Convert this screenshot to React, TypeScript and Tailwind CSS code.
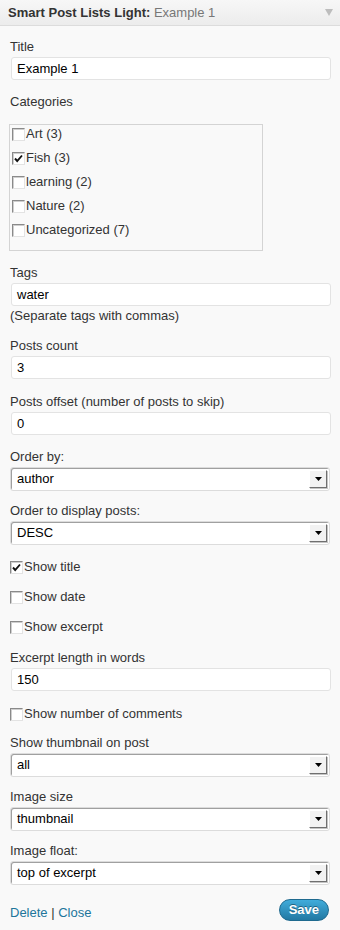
import React from 'react';

const categories = [
  { name: 'Art (3)', checked: false },
  { name: 'Fish (3)', checked: true },
  { name: 'learning (2)', checked: false },
  { name: 'Nature (2)', checked: false },
  { name: 'Uncategorized (7)', checked: false },
];

function Checkbox({ checked }: { checked?: boolean }) {
  return (
    <span className="relative inline-block w-[13px] h-[13px] shrink-0 bg-white border-t border-l border-[#8a8a8a] border-b border-r border-b-[#e3e3e3] border-r-[#e3e3e3] shadow-[inset_1px_1px_0_#cfcfcf]">
      {checked && (
        <svg viewBox="0 0 13 13" className="absolute left-[-1px] top-[-1px] w-[13px] h-[13px]">
          <path d="M3 6.5 L5.2 9 L10 3.5" fill="none" stroke="#111" strokeWidth="1.9" />
        </svg>
      )}
    </span>
  );
}

function Label({ children, className = '' }: { children: React.ReactNode; className?: string }) {
  return <div className={`h-4 leading-4 text-[13px] text-[#333] ${className}`}>{children}</div>;
}

function TextInput({ value }: { value: string }) {
  return (
    <div className="mt-[2px] ml-[2px] h-[23px] w-[320px] bg-white border border-[#e3e3e3] rounded-[3px] px-[5px] leading-[21px] text-[13px] text-black">
      {value}
    </div>
  );
}

function Select({ value }: { value: string }) {
  return (
    <div className="mt-[2px] ml-[1px] h-[24px] w-[320px] flex items-center bg-white border border-[#dcdcdc] rounded-[3px] shadow-[inset_1px_1px_0_#a0a0a0]">
      <span className="flex-1 pl-[6px] text-[13px] text-black leading-4">{value}</span>
      <span className="mr-[2px] w-[18px] h-[18px] flex items-center justify-center bg-[#f2f2f2] border border-t-white border-l-white border-b-[#6f6f6f] border-r-[#6f6f6f] shadow-[1px_1px_0_#c4c4c4]">
        <svg viewBox="0 0 7 4" className="w-[7px] h-[4px]">
          <path d="M0 0 H7 L3.5 4 Z" fill="#000" />
        </svg>
      </span>
    </div>
  );
}

function CheckRow({ label, checked }: { label: string; checked?: boolean }) {
  return (
    <div className="flex items-center gap-[1px] h-4 text-[13px] text-[#333] leading-4">
      <Checkbox checked={checked} />
      <span>{label}</span>
    </div>
  );
}

export default function App() {
  return (
    <div className="w-[340px] h-[930px] bg-[#f9f9f9] font-['Liberation_Sans',Arial,sans-serif]">
      <div className="h-[26px] flex items-center justify-between pl-[8px] pr-[7px] bg-gradient-to-b from-[#f7f7f7] to-[#ececec] border-b border-[#dcdcdc]">
        <div className="text-[13px] leading-4 text-[#333]">
          <span className="font-bold">Smart Post Lists Light:</span>
          <span className="text-[#777]"> Example 1</span>
        </div>
        <svg viewBox="0 0 8 7" className="w-[8px] h-[7px]">
          <path d="M0 0 H8 L4 7 Z" fill="#bdbdbd" />
        </svg>
      </div>

      <div className="pl-[9px] pr-[9px]">
        <Label className="mt-[13px] ml-[1px]">Title</Label>
        <TextInput value="Example 1" />

        <Label className="mt-[14px] ml-[1px]">Categories</Label>
        <div className="mt-[14px] w-[254px] h-[127px] border border-[#d4d4d4] pt-[1px] pl-[2px] flex flex-col gap-[8px]">
          {categories.map((c) => (
            <CheckRow key={c.name} label={c.name} checked={c.checked} />
          ))}
        </div>

        <Label className="mt-[14px] ml-[1px]">Tags</Label>
        <TextInput value="water" />
        <Label className="mt-[2px] ml-[1px]">(Separate tags with commas)</Label>

        <Label className="mt-[14px] ml-[1px]">Posts count</Label>
        <TextInput value="3" />

        <Label className="mt-[15px] ml-[1px]">Posts offset (number of posts to skip)</Label>
        <TextInput value="0" />

        <Label className="mt-[14px] ml-[1px]">Order by:</Label>
        <Select value="author" />

        <Label className="mt-[12px] ml-[1px]">Order to display posts:</Label>
        <Select value="DESC" />

        <div className="mt-[14px] ml-[1px] flex flex-col gap-[14px]">
          <CheckRow label="Show title" checked />
          <CheckRow label="Show date" />
          <CheckRow label="Show excerpt" />
        </div>

        <Label className="mt-[15px] ml-[1px]">Excerpt length in words</Label>
        <TextInput value="150" />

        <div className="mt-[15px] ml-[1px]">
          <CheckRow label="Show number of comments" />
        </div>

        <Label className="mt-[13px] ml-[1px]">Show thumbnail on post</Label>
        <Select value="all" />

        <Label className="mt-[12px] ml-[1px]">Image size</Label>
        <Select value="thumbnail" />

        <Label className="mt-[12px] ml-[1px]">Image float:</Label>
        <Select value="top of excerpt" />

        <div className="mt-[14px] flex items-center justify-between pr-[2px]">
          <div className="ml-[1px] text-[13px] leading-4 mt-[5px]">
            <a href="#" className="text-[#21759b]">Delete</a>
            <span className="text-[#333]"> | </span>
            <a href="#" className="text-[#21759b]">Close</a>
          </div>
          <button className="h-[22px] px-[9px] rounded-full bg-gradient-to-b from-[#41acdb] to-[#2279a3] border border-[#1f6a8f] text-white font-bold text-[13px] leading-4 [text-shadow:0_-1px_0_rgba(0,0,0,0.4)]">
            Save
          </button>
        </div>
      </div>
    </div>
  );
}
